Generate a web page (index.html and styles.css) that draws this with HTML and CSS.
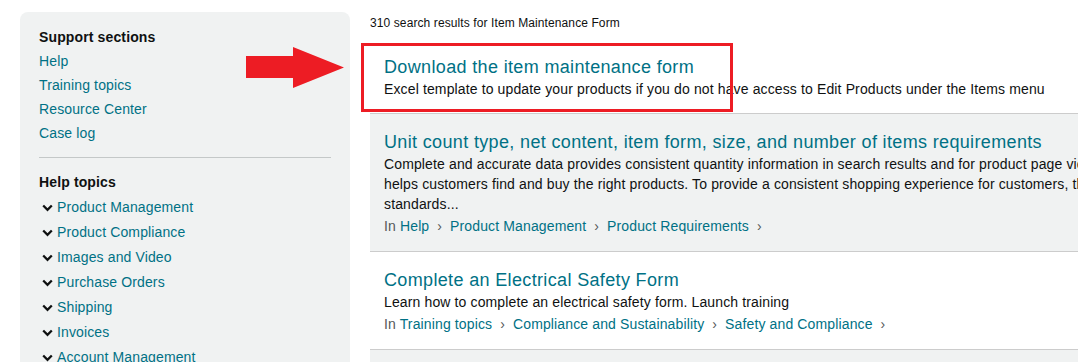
FILE: index.html
```html
<!DOCTYPE html>
<html lang="en">
<head>
    <meta charset="UTF-8">
    <meta name="viewport" content="width=device-width, initial-scale=1.0">
    <title>Search results - Help</title>
    <link rel="stylesheet" href="styles.css">
</head>
<body>
    <div class="page">
        <aside class="sidebar">
            <h3 class="side-head">Support sections</h3>
            <ul class="side-links">
                <li><a href="#">Help</a></li>
                <li><a href="#">Training topics</a></li>
                <li><a href="#">Resource Center</a></li>
                <li><a href="#">Case log</a></li>
            </ul>
            <hr class="side-rule">
            <h3 class="side-head">Help topics</h3>
            <ul class="topics">
                <li><svg class="chev" viewBox="0 0 11 8"><polyline points="1.2,1.5 5.5,5.8 9.8,1.5"/></svg><a href="#">Product Management</a></li>
                <li><svg class="chev" viewBox="0 0 11 8"><polyline points="1.2,1.5 5.5,5.8 9.8,1.5"/></svg><a href="#">Product Compliance</a></li>
                <li><svg class="chev" viewBox="0 0 11 8"><polyline points="1.2,1.5 5.5,5.8 9.8,1.5"/></svg><a href="#">Images and Video</a></li>
                <li><svg class="chev" viewBox="0 0 11 8"><polyline points="1.2,1.5 5.5,5.8 9.8,1.5"/></svg><a href="#">Purchase Orders</a></li>
                <li><svg class="chev" viewBox="0 0 11 8"><polyline points="1.2,1.5 5.5,5.8 9.8,1.5"/></svg><a href="#">Shipping</a></li>
                <li><svg class="chev" viewBox="0 0 11 8"><polyline points="1.2,1.5 5.5,5.8 9.8,1.5"/></svg><a href="#">Invoices</a></li>
                <li><svg class="chev" viewBox="0 0 11 8"><polyline points="1.2,1.5 5.5,5.8 9.8,1.5"/></svg><a href="#">Account Management</a></li>
                <li><svg class="chev" viewBox="0 0 11 8"><polyline points="1.2,1.5 5.5,5.8 9.8,1.5"/></svg><a href="#">Reports</a></li>
            </ul>
        </aside>

        <main class="results">
            <p class="count">310 search results for Item Maintenance Form</p>

            <div class="result first">
                <!-- annotation -->
                <svg class="arrow" viewBox="0 0 98 41"><polygon points="0,9 47,9 47,0 98,20.5 47,41 47,31 0,31"/></svg>
                <div class="highlight"></div>
                <a class="title" href="#">Download the item maintenance form</a>
                <p class="desc">Excel template to update your products if you do not have access to Edit Products under the Items menu</p>
            </div>

            <div class="result shaded">
                <a class="title" href="#">Unit count type, net content, item form, size, and number of items requirements</a>
                <p class="desc">Complete and accurate data provides consistent quantity information in search results and for product page views and helps customers find and buy the right products. To provide a consistent shopping experience for customers, the standards...</p>
                <p class="crumbs">In <a href="#">Help</a><span class="sep">›</span><a href="#">Product Management</a><span class="sep">›</span><a href="#">Product Requirements</a><span class="sep">›</span></p>
            </div>

            <div class="result">
                <a class="title" href="#">Complete an Electrical Safety Form</a>
                <p class="desc">Learn how to complete an electrical safety form. Launch training</p>
                <p class="crumbs">In <a href="#">Training topics</a><span class="sep">›</span><a href="#">Compliance and Sustainability</a><span class="sep">›</span><a href="#">Safety and Compliance</a><span class="sep">›</span></p>
            </div>

            <div class="result shaded">
                <a class="title" href="#">Item maintenance templates</a>
                <p class="desc">Update product details in bulk using the item maintenance template.</p>
            </div>
        </main>
    </div>
</body>
</html>
```

FILE: styles.css
```css
html, body {
    overflow: hidden;
}
body {
    margin: 0;
    font-family: "Liberation Sans", Arial, sans-serif;
    font-size: 14px;
    letter-spacing: 0.13px;
    color: #0f1111;
    background: #fff;
}
a {
    color: #007185;
    text-decoration: none;
}
p, h3, ul {
    margin: 0;
}

.page {
    display: flex;
    gap: 20px;
    padding: 12px 0 0 20px;
    align-items: flex-start;
}

/* left column */
.sidebar {
    flex: none;
    width: 330px;
    box-sizing: border-box;
    padding: 13px 19px 40px;
    background: #f0f2f2;
    border-radius: 8px;
}
.side-head {
    font-size: 14px;
    font-weight: 700;
    line-height: 24px;
}
.side-links {
    list-style: none;
    padding: 0;
}
.side-links li {
    line-height: 24px;
}
.side-rule {
    border: 0;
    border-top: 1px solid #c4c8c8;
    margin: 12px 0;
}
.topics {
    list-style: none;
    padding: 0;
    margin-top: 0.5px;
}
.topics li {
    display: flex;
    align-items: center;
    line-height: 25px;
    padding-left: 3px;
}
.chev {
    width: 11px;
    height: 8px;
    margin: 1px 4px 0 0;
    fill: none;
    stroke: #0f1111;
    stroke-width: 2.3;
}

/* search results */
.results {
    flex: none;
    width: 780px;
}
.count {
    font-size: 12px;
    letter-spacing: 0.1px;
    line-height: 18px;
    padding-top: 2px;
    margin-bottom: 7px;
}
.result {
    position: relative;
    padding: 16px 14px 15px;
    border-bottom: 1px solid #cccccc;
}
.result.first {
    padding-bottom: 14px;
}
.result.shaded {
    background: #f0f2f2;
}
.title {
    display: block;
    font-size: 18px;
    letter-spacing: 0.35px;
    line-height: 24px;
}
.desc {
    line-height: 20px;
}
.crumbs {
    margin-top: 2px;
    height: 20px;
    line-height: 20px;
    color: #565959;
}
.sep {
    margin: 0 8px;
    color: #565959;
}

/* red callout drawn over the page */
.highlight {
    position: absolute;
    left: -9px;
    top: 4px;
    width: 372px;
    height: 69px;
    box-sizing: border-box;
    border: 3px solid #ed1c24;
}
.arrow {
    position: absolute;
    left: -124px;
    top: 8px;
    width: 98px;
    height: 41px;
    fill: #ed1c24;
}
```
